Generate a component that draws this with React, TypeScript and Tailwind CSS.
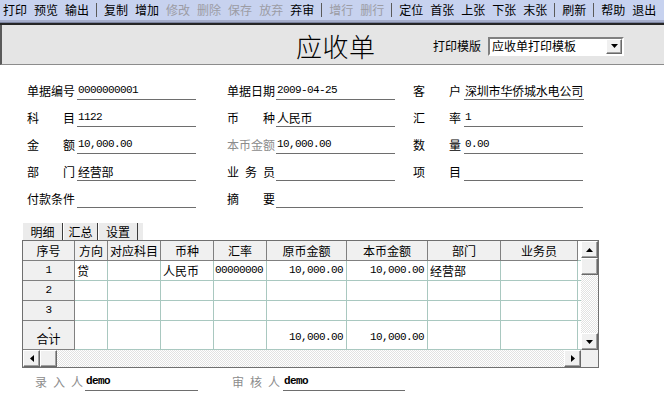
import React from "react";

const CJK = "[font-family:'Noto_Sans_CJK_SC',sans-serif]";
const MONO = "[font-family:'Liberation_Mono',monospace] text-[11px] tracking-[-0.6px]";

type Tool = { t: string; off?: boolean } | "|";

const tools: Tool[] = [
  { t: "打印" },
  { t: "预览" },
  { t: "输出" },
  "|",
  { t: "复制" },
  { t: "增加" },
  { t: "修改", off: true },
  { t: "删除", off: true },
  { t: "保存", off: true },
  { t: "放弃", off: true },
  { t: "弃审" },
  "|",
  { t: "增行", off: true },
  { t: "删行", off: true },
  "|",
  { t: "定位" },
  { t: "首张" },
  { t: "上张" },
  { t: "下张" },
  { t: "末张" },
  "|",
  { t: "刷新" },
  "|",
  { t: "帮助" },
  { t: "退出" },
];

function Arrow({ dir }: { dir: "up" | "down" | "left" | "right" }) {
  const horiz = dir === "up" || dir === "down";
  const pts = {
    up: "0,4 7,4 3.5,0",
    down: "0,0 7,0 3.5,4",
    left: "4,0 4,7 0,3.5",
    right: "0,0 0,7 4,3.5",
  }[dir];
  return (
    <svg
      width={horiz ? 7 : 4}
      height={horiz ? 4 : 7}
      viewBox={horiz ? "0 0 7 4" : "0 0 4 7"}
    >
      <polygon points={pts} fill="#000" />
    </svg>
  );
}

function Btn3D({
  children,
  className = "",
}: {
  children?: React.ReactNode;
  className?: string;
}) {
  return (
    <div
      className={`flex items-center justify-center bg-[#f0f0f0] border border-t-white border-l-white border-r-[#696969] border-b-[#696969] shadow-[inset_-1px_-1px_0_#a0a0a0] ${className}`}
    >
      {children}
    </div>
  );
}

function Label({ text, gray }: { text: string; gray?: boolean }) {
  return (
    <div
      className={`w-[48px] h-[18px] flex items-center justify-between shrink-0 ${
        gray ? "text-[#8c8c8c]" : ""
      }`}
    >
      {text.split("").map((c, i) => (
        <span key={i}>{c}</span>
      ))}
    </div>
  );
}

interface FieldProps {
  label: string;
  value?: string;
  mono?: boolean;
  gray?: boolean;
  gap?: string;
  w?: string;
  className?: string;
}

function Field({
  label,
  value = "",
  mono,
  gray,
  gap = "ml-[2px]",
  w = "w-[119px]",
  className = "",
}: FieldProps) {
  return (
    <div className={`flex ${className}`}>
      <Label text={label} gray={gray} />
      <div
        className={`${gap} ${w} h-[18px] border-b border-[#6e6e6e] flex items-center pl-[1px] whitespace-nowrap overflow-hidden ${
          mono ? MONO : "tracking-[-0.2px]"
        }`}
      >
        {value}
      </div>
    </div>
  );
}

const colW = [
  "w-[52px]",
  "w-[33px]",
  "w-[53px]",
  "w-[53px]",
  "w-[53px]",
  "w-[80px]",
  "w-[81px]",
  "w-[73px]",
  "w-[77px]",
];
const heads = ["序号", "方向", "对应科目", "币种", "汇率", "原币金额", "本币金额", "部门", "业务员"];
const align = ["c", "l", "l", "l", "r", "r", "r", "l", "l"];
const rows = [
  ["1", "贷", "", "人民币", "1.00000000", "10,000.00", "10,000.00", "经营部", ""],
  ["2", "", "", "", "", "", "", "", ""],
  ["3", "", "", "", "", "", "", "", ""],
];
const numCols = [4, 5, 6];

function Grid() {
  return (
    <div className="ml-[22px] w-[577px] border border-[#6f6f6f] flex flex-col">
      <div className="flex">
        <div className="w-[558px] flex flex-col">
          {/* header */}
          <div className="flex h-[20px]">
            {heads.map((h, i) => (
              <div
                key={h}
                className={`${colW[i]} h-full flex items-center justify-center bg-[#f0f0f0] border-r border-b border-[#808080]`}
              >
                {h}
              </div>
            ))}
            <div className="w-[3px] h-full border-b border-[#a9c8c0]" />
          </div>
          {rows.map((r, ri) => (
            <div key={ri} className="flex h-[20px]">
              {r.map((v, i) => {
                if (i === 0)
                  return (
                    <div
                      key={i}
                      className={`${colW[i]} h-full flex items-center justify-center bg-[#f0f0f0] border-r border-b border-[#808080] ${MONO}`}
                    >
                      {v}
                    </div>
                  );
                const a = align[i];
                return (
                  <div
                    key={i}
                    className={`${colW[i]} h-full flex items-center overflow-hidden whitespace-nowrap border-r border-b border-[#a9c8c0] ${
                      a === "r" ? "justify-end pr-[3px]" : "justify-start pl-[2px]"
                    } ${numCols.includes(i) ? MONO : ""}`}
                  >
                    {v}
                  </div>
                );
              })}
              <div className="w-[3px] h-full border-b border-[#a9c8c0]" />
            </div>
          ))}
          {/* total row */}
          <div className="flex h-[29px]">
            <div
              className={`${colW[0]} h-full flex flex-col items-center bg-[#f0f0f0] border-r border-b border-[#808080]`}
            >
              <div className={`h-[8px] overflow-hidden leading-[20px] ${MONO}`}>4</div>
              <div className="h-[20px] flex items-center">合计</div>
            </div>
            {heads.slice(1).map((_, j) => {
              const i = j + 1;
              return (
                <div
                  key={i}
                  className={`${colW[i]} h-full flex items-end justify-end pr-[3px] pb-[4px] border-r border-b border-[#a9c8c0] ${MONO}`}
                >
                  {i === 5 || i === 6 ? "10,000.00" : ""}
                </div>
              );
            })}
            <div className="w-[3px] h-full border-b border-[#a9c8c0]" />
          </div>
        </div>
        {/* vertical scrollbar */}
        <div className="w-[17px] flex flex-col">
          <Btn3D className="h-[17px]">
            <Arrow dir="up" />
          </Btn3D>
          <Btn3D className="h-[17px]" />
          <div className="flex-1 bg-[repeating-conic-gradient(#e2e2e2_0_25%,#ffffff_0_50%)] bg-size-[2px_2px]" />
          <Btn3D className="h-[17px]">
            <Arrow dir="down" />
          </Btn3D>
        </div>
      </div>
      {/* horizontal scrollbar */}
      <div className="flex h-[17px]">
        <div className="w-[558px] flex">
          <Btn3D className="w-[17px] h-full">
            <Arrow dir="left" />
          </Btn3D>
          <Btn3D className="w-[17px] h-full" />
          <div className="flex-1 bg-[repeating-conic-gradient(#e2e2e2_0_25%,#ffffff_0_50%)] bg-size-[2px_2px]" />
          <Btn3D className="w-[17px] h-full">
            <Arrow dir="right" />
          </Btn3D>
        </div>
        <div className="w-[17px] h-full bg-[#f0f0f0]" />
      </div>
    </div>
  );
}

export default function App() {
  return (
    <div className={`w-[664px] h-[399px] overflow-hidden bg-white text-[12px] text-black ${CJK}`}>
      {/* Toolbar */}
      <div className="h-[20px] bg-[#c7d2ef] flex items-center gap-[7px] pl-[3px] pb-[1px]">
        {tools.map((t, i) =>
          t === "|" ? (
            <div key={i} className="w-px h-[14px] bg-[#5a5a5a]" />
          ) : (
            <span
              key={i}
              className={`leading-none whitespace-nowrap ${t.off ? "text-[#9c9ca4]" : ""}`}
            >
              {t.t}
            </span>
          )
        )}
      </div>
      <div className="h-[2px] bg-[#a6aecb]" />
      <div className="h-px bg-[#7c84a0]" />
      <div className="h-[2px] bg-[#262626]" />

      {/* Title panel */}
      <div className="h-[40px] bg-[#e5e5e5] border-l-2 border-l-[#5a5a5a] border-b border-b-[#8c8c8c] flex items-center pt-[3px]">
        <div className="ml-[294px] w-[82px] text-[26px] leading-none font-light whitespace-nowrap tracking-[0.5px]">
          应收单
        </div>
        <div className="ml-[55px] w-[48px] whitespace-nowrap">打印模版</div>
        <div className="ml-[7px] w-[136px] h-[19px] border-2 border-t-[#808080] border-l-[#808080] border-b-white border-r-white bg-white flex">
          <div className="flex-1 flex items-center pl-[2px] whitespace-nowrap">应收单打印模板</div>
          <Btn3D className="w-[16px] h-full">
            <Arrow dir="down" />
          </Btn3D>
        </div>
      </div>

      {/* Form */}
      <div className="pt-[17px] pl-[27px] flex flex-col gap-[9px]">
        <div className="flex">
          <Field label="单据编号" value="0000000001" mono />
          <Field className="ml-[31px]" gap="ml-[1px]" label="单据日期" value="2009-04-25" mono />
          <Field className="ml-[18px]" gap="ml-[3px]" w="w-[120px]" label="客户" value="深圳市华侨城水电公司" />
        </div>
        <div className="flex">
          <Field label="科目" value="1122" mono />
          <Field className="ml-[31px]" gap="ml-[1px]" label="币种" value="人民币" />
          <Field className="ml-[18px]" gap="ml-[3px]" label="汇率" value="1" mono />
        </div>
        <div className="flex">
          <Field label="金额" value="10,000.00" mono />
          <Field className="ml-[31px]" gap="ml-[1px]" label="本币金额" value="10,000.00" mono gray />
          <Field className="ml-[18px]" gap="ml-[3px]" label="数量" value="0.00" mono />
        </div>
        <div className="flex">
          <Field label="部门" value="经营部" />
          <Field className="ml-[31px]" gap="ml-[1px]" label="业务员" />
          <Field className="ml-[18px]" gap="ml-[3px]" label="项目" />
        </div>
        <div className="flex">
          <Field label="付款条件" />
          <Field className="ml-[31px]" gap="ml-[1px]" w="w-[307px]" label="摘要" />
        </div>
      </div>

      {/* Tabs */}
      <div className="mt-[15px] ml-[22px] w-[121px] h-[17px] bg-[#ebebeb] flex">
        {[
          ["明细", "w-[41px]"],
          ["汇总", "w-[35px]"],
          ["设置", "w-[40px]"],
        ].map(([t, w]) => (
          <div
            key={t}
            className={`${w} h-full flex items-center justify-center border-l border-l-white border-r border-r-[#3c3c3c]`}
          >
            {t}
          </div>
        ))}
      </div>

      <Grid />

      {/* Footer */}
      <div className="mt-[5px] pl-[35px] flex">
        <div className="w-[48px] h-[18px] flex items-center justify-between text-[#8c8c8c]">
          <span>录</span>
          <span>入</span>
          <span>人</span>
        </div>
        <div className={`ml-[2px] w-[113px] h-[18px] border-b border-[#6e6e6e] flex items-center pl-[1px] font-bold ${MONO}`}>
          demo
        </div>
        <div className="ml-[34px] w-[48px] h-[18px] flex items-center justify-between text-[#8c8c8c]">
          <span>审</span>
          <span>核</span>
          <span>人</span>
        </div>
        <div className={`ml-[3px] w-[122px] h-[18px] border-b border-[#6e6e6e] flex items-center pl-[1px] font-bold ${MONO}`}>
          demo
        </div>
      </div>
    </div>
  );
}
